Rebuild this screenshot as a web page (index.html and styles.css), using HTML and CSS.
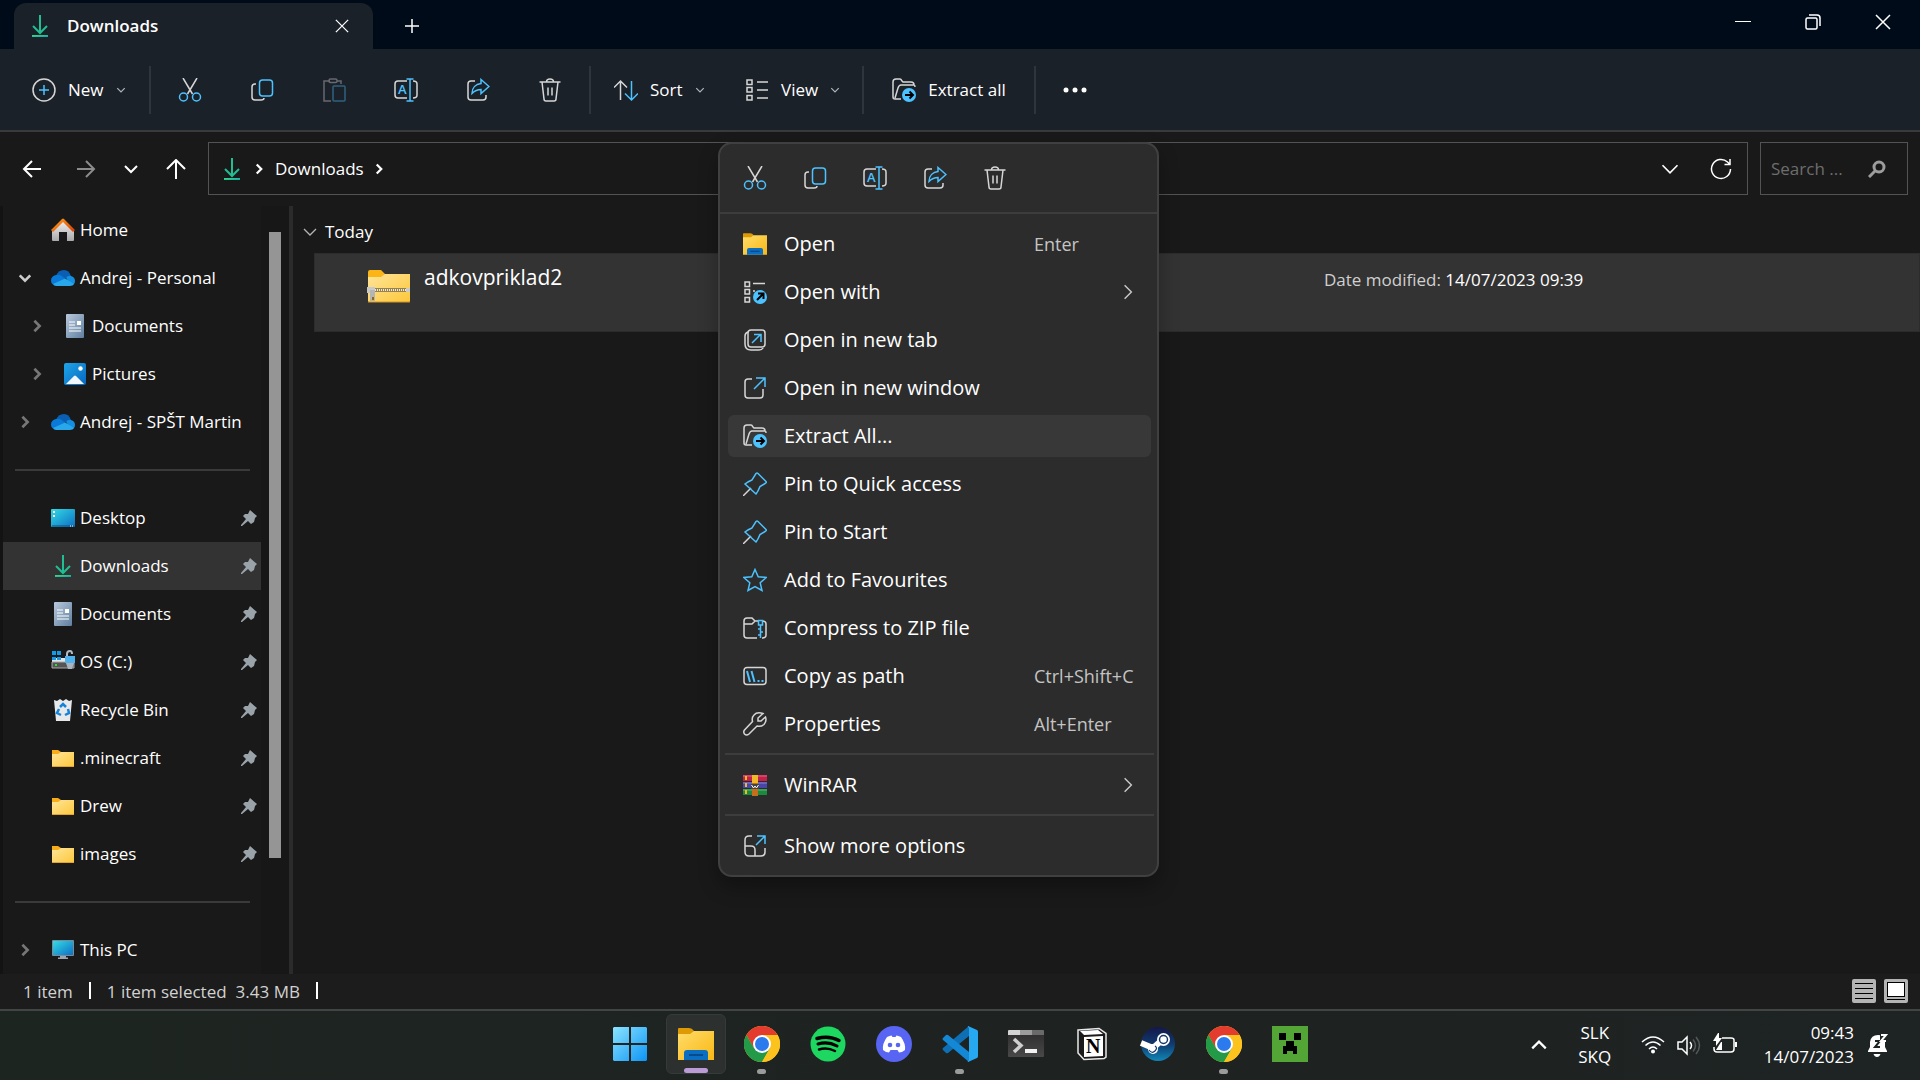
FILE: index.html
```html
<!DOCTYPE html>
<html lang="en">

<head>
  <meta charset="UTF-8">
  <meta name="viewport" content="width=device-width, initial-scale=1.0">
  <title>Downloads</title>
  <link rel="stylesheet" href="styles.css">
</head>

<body>
  <!-- shared icons -->
  <svg class="sprite" aria-hidden="true">
    <defs>
      <linearGradient id="gDown" x1="0" y1="0" x2="1" y2="1">
        <stop offset="0" stop-color="#3ddc84" />
        <stop offset="1" stop-color="#0fa3a8" />
      </linearGradient>
      <linearGradient id="gFolder" x1="0" y1="0" x2="1" y2="1">
        <stop offset="0" stop-color="#ffe59a" />
        <stop offset="1" stop-color="#fcc73a" />
      </linearGradient>
      <linearGradient id="gExplorer" x1="0" y1="0" x2="1" y2="1">
        <stop offset="0" stop-color="#ffdc6b" />
        <stop offset="1" stop-color="#f9b813" />
      </linearGradient>
      <linearGradient id="gScreen" x1="0" y1="0" x2="1" y2="1">
        <stop offset="0" stop-color="#33dbe6" />
        <stop offset="1" stop-color="#0d6fc4" />
      </linearGradient>
      <linearGradient id="gDoc" x1="0" y1="0" x2="1" y2="1">
        <stop offset="0" stop-color="#b9c9dc" />
        <stop offset="1" stop-color="#5f7f9f" />
      </linearGradient>
      <linearGradient id="gPic" x1="0" y1="0" x2="1" y2="1">
        <stop offset="0" stop-color="#1fa5e8" />
        <stop offset="1" stop-color="#0667c0" />
      </linearGradient>
      <linearGradient id="gWin" x1="0" y1="0" x2="1" y2="1">
        <stop offset="0" stop-color="#8be4ff" />
        <stop offset="1" stop-color="#0d94f5" />
      </linearGradient>
      <linearGradient id="gSteam" x1="0" y1="0" x2="0" y2="1">
        <stop offset="0" stop-color="#15174a" />
        <stop offset="0.5" stop-color="#103a6e" />
        <stop offset="1" stop-color="#1187b8" />
      </linearGradient>
      <linearGradient id="gTerm" x1="0" y1="0" x2="0" y2="1">
        <stop offset="0" stop-color="#2c2c2c" />
        <stop offset="1" stop-color="#484848" />
      </linearGradient>
      <linearGradient id="gRoof" x1="0" y1="0" x2="1" y2="1">
        <stop offset="0" stop-color="#ffa51f" />
        <stop offset="1" stop-color="#d83c04" />
      </linearGradient>
      <linearGradient id="gWall" x1="0" y1="0" x2="0" y2="1">
        <stop offset="0" stop-color="#efefef" />
        <stop offset="1" stop-color="#a9a9a9" />
      </linearGradient>
    </defs>

    <symbol id="download" viewBox="0 0 24 24">
      <path d="M12 1v17M5 12l7 7 7-7" fill="none" stroke="#21bd93" stroke-width="2" />
      <rect x="4" y="21" width="16" height="2" fill="url(#gDown)" />
    </symbol>
    <symbol id="plus" viewBox="0 0 16 16"><path class="w" d="M8 1v14M1 8h14" /></symbol>
    <symbol id="close" viewBox="0 0 16 16"><path class="w" d="M1 1l14 14M15 1L1 15" /></symbol>
    <symbol id="min" viewBox="0 0 16 16"><path d="M0 7h16v1H0z" fill="#fff" /></symbol>
    <symbol id="restore" viewBox="0 0 16 16">
      <rect class="w" x="1" y="4" width="11" height="11" rx="1.500" />
      <path class="w" d="M4 1h8q3 0 3 3v8" />
    </symbol>
    <symbol id="chev-down" viewBox="0 0 16 16"><path class="c" d="M2 5l6 6 6-6" /></symbol>
    <symbol id="chev-right" viewBox="0 0 16 16"><path class="c" d="M5 2l6 6-6 6" /></symbol>
    <symbol id="chev-up" viewBox="0 0 16 16"><path class="c" d="M2 11l6-6 6 6" /></symbol>
    <symbol id="arrow-left" viewBox="0 0 20 20"><path class="c" d="M19 10H2M10 2l-8 8 8 8" /></symbol>
    <symbol id="arrow-right" viewBox="0 0 20 20"><path class="c" d="M1 10h17M10 2l8 8-8 8" /></symbol>
    <symbol id="arrow-up" viewBox="0 0 20 20"><path class="c" d="M10 20V1M1 10l9-9 9 9" /></symbol>
    <symbol id="refresh" viewBox="0 0 22 22">
      <path class="w" d="M20.500 11a9.500 9.500 0 1 1-3-7l2 2M20 1v5.500h-5.500" />
    </symbol>

    <symbol id="new" viewBox="0 0 24 24">
      <circle class="g" cx="12" cy="12" r="11" />
      <path class="b" d="M12 7v10M7 12h10" />
    </symbol>
    <symbol id="cut" viewBox="0 0 24 24">
      <path class="g" d="M5 0l9.500 16M19 0L9.500 16" />
      <circle class="b" cx="5.500" cy="19" r="4" />
      <circle class="b" cx="18.500" cy="19" r="4" />
    </symbol>
    <symbol id="copy" viewBox="0 0 24 24">
      <path class="g" d="M6 6H5q-3 0-3 3v10q0 3 3 3h6q3 0 3-2" />
      <rect class="b" x="9.500" y="2" width="13" height="16" rx="3" />
    </symbol>
    <symbol id="paste" viewBox="0 0 24 24">
      <path class="g" d="M8 3H2v20h7M15 3h4v3" />
      <rect class="g" x="7" y="1" width="8" height="3.500" rx="1.500" />
      <rect class="b" x="11" y="8" width="12" height="15" rx="1" />
    </symbol>
    <symbol id="rename" viewBox="0 0 24 24">
      <path class="g" d="M13 3H4Q1 3 1 6v11q0 3 3 3h9M19 3q4 0 4 3v11q0 3-4 3" />
      <path class="b" d="M12.500 1h7M12.500 23h7M16 1v22" />
    </symbol>
    <symbol id="share" viewBox="0 0 24 24">
      <path class="g" d="M9 3H5Q2 3 2 6v13q0 3 3 3h12q3 0 3-3v-2" />
      <path class="b" d="M15 1.500l8 7-8 7v-4c-4 0-6 1-9 4 0-6 4-9.500 9-10z" />
    </symbol>
    <symbol id="delete" viewBox="0 0 24 24">
      <path class="g" d="M1.500 4h21M4 4l2 17q0 2 2 2h8q2 0 2-2l2-17M8.500 4q0-3 3.500-3t3.500 3M10 9.500v8M14 9.500v8" />
    </symbol>
    <symbol id="sort" viewBox="0 0 24 24">
      <path class="g" d="M6.500 22V3M0 9.500L6.500 3l6.500 6.500" />
      <path class="b" d="M17.500 3v19M11 15.500l6.500 6.500 6.500-6.500" />
    </symbol>
    <symbol id="view" viewBox="0 0 24 24">
      <path class="g" d="M2 2h5v4.500H2zM2 9.500h5V14H2zM2 17.500h5V22H2zM12 4h11M12 12h11M12 20h11" />
    </symbol>
    <symbol id="extract" viewBox="0 0 24 24">
      <path class="g" d="M9 21H3q-2 0-2-2V4q0-3 3-3h4q1 0 2 2l1 1h8q3 0 3 3M3 20L6 10q1-3 3-3h13q1 0 1 2" />
      <circle cx="17" cy="17" r="7" fill="#4cc2ff" />
      <path d="M13 17h8M17.500 13.500L21 17l-3.500 3.500" fill="none" stroke="#000" stroke-width="2" />
    </symbol>
    <symbol id="dots" viewBox="0 0 26 6">
      <circle cx="4" cy="3" r="2.500" fill="#fff" />
      <circle cx="13" cy="3" r="2.500" fill="#fff" />
      <circle cx="22" cy="3" r="2.500" fill="#fff" />
    </symbol>
    <symbol id="search" viewBox="0 0 18 18">
      <circle cx="11" cy="7" r="5" fill="none" stroke="#9d9d9d" stroke-width="3" />
      <path d="M7 11l-6 6" fill="none" stroke="#9d9d9d" stroke-width="3" />
    </symbol>

    <symbol id="openwith" viewBox="0 0 24 24">
      <path class="g" d="M2 2h4.500v4.500H2zM2 9.500h4.500V14H2zM2 17.500h4.500V22H2zM10 3.500h12M10 11h2" />
      <circle cx="17" cy="17" r="7" fill="#4cc2ff" />
      <path d="M14 20l6-6M15 13.500h5.500V19" fill="none" stroke="#000" stroke-width="2" />
    </symbol>
    <symbol id="newtab" viewBox="0 0 24 24">
      <rect class="g" x="5" y="2" width="17" height="17" rx="3" />
      <path class="g" d="M5 4Q2 5 2 8v8q0 6 6 6h8q3 0 4-2" />
      <path class="b" d="M9 15l8-8M11 6.500h7V14" />
    </symbol>
    <symbol id="newwindow" viewBox="0 0 24 24">
      <path class="g" d="M9 3H5Q2 3 2 6v13q0 3 3 3h12q3 0 3-3v-6" />
      <path class="b" d="M11 13L22 2M13 2h9v9" />
    </symbol>
    <symbol id="pin" viewBox="0 0 24 24">
      <path class="g" d="M0 24l8-8" />
      <path class="b" d="M13 1.500q1-1 2 0l8 8q1 1-1 2l-5 3q-2 5-4 7.500L2 12q2-2 7-4z" />
    </symbol>
    <symbol id="star" viewBox="0 0 24 24">
      <path class="b" d="M12 1.500l3.200 7.200 8 .8-6 5.300 1.800 7.700-7-4-7 4 1.800-7.700-6-5.300 8-.8z" />
    </symbol>
    <symbol id="zip" viewBox="0 0 24 24">
      <path class="g" d="M14 22H4q-3 0-3-3V5q0-3 3-3h5l3 3h3M1 8h8l3-3M19 5q4 0 4 3v11q0 3-4 3" />
      <path class="b" d="M15.500 4.500h4V9h-4zM17.500 9v13M15 13h2M18 16h2M15 19h2" />
    </symbol>
    <symbol id="path" viewBox="0 0 24 24">
      <rect class="g" x="1" y="3.500" width="22" height="17" rx="3" />
      <path class="b thick" d="M4 7l3 11M8.500 7l3 11M14.500 17h2M18.500 17h2" />
    </symbol>
    <symbol id="wrench" viewBox="0 0 24 24">
      <path class="g" d="M20 1.500Q14-.5 11 3q-2.500 2.500-1.500 6.500L1.500 18q-1.500 2 0 4 2 2 4.500 0l8-8q4 1 7-1.500Q24 9 22.500 5L18 9h-3V6z" />
    </symbol>
    <symbol id="moreopts" viewBox="0 0 24 24">
      <path class="g" d="M9 2H6Q2 2 2 6v12q0 4 4 4h12q4 0 4-4v-4M2 12h6q4 0 4 4v6" />
      <path class="b" d="M13 11l9-9M14 2h8v8" />
    </symbol>

    <symbol id="explorer" viewBox="0 0 36 36">
      <path d="M0 3q0-1 1-1h10q3 0 5 3v4H0z" fill="#dd9a05" />
      <path d="M0 8h12l4-3h20v29H0z" fill="url(#gExplorer)" />
      <path d="M6 34V27q0-3 3-3h18q3 0 3 3v7z" fill="#0a6fc2" />
      <path d="M11 29h14" stroke="#0a4a8a" stroke-width="2" />
    </symbol>
    <symbol id="folder" viewBox="0 0 24 24">
      <path d="M1 4h6l3 2v3H1z" fill="#f6ad18" />
      <path d="M1 8h6l3-2h13v15H1z" fill="url(#gFolder)" />
      <path d="M1 20.500h22" stroke="#e2a42c" />
    </symbol>
    <symbol id="zipfolder" viewBox="0 0 44 34">
      <path d="M1 3q0-2 2-2h11l4 4v5H1z" fill="#fbb517" />
      <path d="M1 8h13l4-3h25v27q0 1-1 1H2q-1 0-1-1z" fill="url(#gFolder)" />
      <path d="M1 33h42" stroke="#d9951c" />
      <path d="M2 21h41" stroke="#9a8348" stroke-width="4" />
      <path d="M8 21h31" stroke="#e8e8e8" stroke-width="2" stroke-dasharray="1 1" />
      <path d="M0 18h8v6H0zM39 19h4v4h-4z" fill="#c9c9c9" />
      <path d="M3 21h5v11H3z" fill="#b5b5b5" />
      <path d="M5 28h2v3H5z" fill="#8a6a1c" />
    </symbol>
    <symbol id="home" viewBox="0 0 24 24">
      <path d="M1 12L12 3l11 9v10q0 1-1 1h-6v-9H8v9H2q-1 0-1-1z" fill="url(#gWall)" />
      <path d="M0 12L11 1q1-1 2 0l11 11-2 2L12 4 2 14z" fill="url(#gRoof)" />
    </symbol>
    <symbol id="cloud" viewBox="0 0 24 24">
      <path d="M5 10q2-6 8-6 5 0 7 6l-9 4z" fill="#0a5fb5" />
      <path d="M5 19q-5 0-5-4.500T5 9q4-1 7 2l6 5-14 3z" fill="#0a7ad8" />
      <path d="M15 12q2-3 5-2 4 1 4 5t-4 4z" fill="#148ee0" />
      <path d="M2 18l11-5q1-1 2 0l8 5q-1 2-4 2H5q-2 0-3-2z" fill="#28a8ea" />
    </symbol>
    <symbol id="doc" viewBox="0 0 24 24">
      <rect x="3" y="0" width="18" height="24" rx="1" fill="url(#gDoc)" />
      <path d="M6 8h6M6 11h6M6 14h12M6 17h12" stroke="#fff" />
      <path d="M14 7h4v4h-4z" fill="#fff" />
    </symbol>
    <symbol id="pictures" viewBox="0 0 24 24">
      <rect x="1" y="1" width="22" height="22" rx="2" fill="url(#gPic)" />
      <path d="M3 22l8-8q1-1 2 0l8 8z" fill="#f0f6ff" />
      <circle cx="17.500" cy="6.500" r="2.200" fill="#fff" />
    </symbol>
    <symbol id="desktop" viewBox="0 0 24 24">
      <rect x="0" y="3" width="24" height="18" rx="1" fill="url(#gScreen)" />
      <path d="M2 5h2v2H2zM2 9h2v2H2z" fill="#fff" />
      <path d="M1 20h22" stroke="#0a4a7a" />
      <path d="M19 20h3" stroke="#fff" stroke-dasharray="1 1" />
    </symbol>
    <symbol id="drive" viewBox="0 0 24 24">
      <path d="M1 8h22v4H1z" fill="#e4e4e4" />
      <path d="M1 12h22v6H1z" fill="#555" stroke="#aaa" />
      <path d="M4 14h2v2H4z" fill="#2fe02f" />
      <path d="M1 1h4v4H1zM6 1h4v4H6zM1 7h4v3H1zM6 7h4v3H6z" fill="#129be8" />
      <path d="M16 7V4q0-3 3-3 2 0 2 3" fill="none" stroke="#aebcca" stroke-width="2" />
      <path d="M14 6h10v7H14z" fill="#4fb2ec" />
      <path d="M15 13h8l-2 6h-4z" fill="#a8b4c0" />
    </symbol>
    <symbol id="bin" viewBox="0 0 24 24">
      <path d="M3 2l3 1 3-2 3 2 3-2 3 2 3-1-2 21H5z" fill="#e6e8ea" />
      <path d="M9 9l3-3 3 3M17 11l1 4-4 2M10 17l-4-2 2-4" fill="none" stroke="#1683d8" stroke-width="2.500" />
    </symbol>
    <symbol id="pc" viewBox="0 0 24 24">
      <rect x="1" y="2" width="22" height="16" rx="1" fill="#7d8a96" />
      <path d="M2 3h20v14H2z" fill="url(#gScreen)" />
      <path d="M9 18h6v1.500H9zM7 19.500h10V21H7z" fill="#9aa5af" />
    </symbol>
    <symbol id="pinned" viewBox="0 0 16 16">
      <path d="M9 0l7 6-2 2-1 4-3 2-3-3-6 5H0v-1l5-6-3-3 2-2h3z" fill="#9aa3aa" />
    </symbol>
    <symbol id="winrar" viewBox="0 0 24 24">
      <path d="M0 2h24v6H0z" fill="#c81f4a" />
      <path d="M0 9h24v6H0z" fill="#4a45a8" />
      <path d="M0 16h24v6H0z" fill="#1a8a3c" />
      <path d="M0 3h24M0 10h24M0 17h24" stroke="#fff" stroke-opacity="0.350" />
      <path d="M3 3v19" stroke="#f4b820" stroke-width="2" stroke-dasharray="4 3" />
      <path d="M9 2h6v21H9z" fill="#c4701a" />
      <path d="M9 2h6v8H9z" fill="#f0b92a" />
      <path d="M8 11h8v5H8z" fill="#444" />
      <path d="M8.500 12l2 3 1.500-2 1.500 2 2-3" fill="none" stroke="#fff" />
    </symbol>

    <symbol id="windows" viewBox="0 0 36 36">
      <path d="M2 1h15v16H1V2zM19 1h15l1 1v15H19zM1 19h16v16H2l-1-1zM19 19h16v15l-1 1H19z" fill="url(#gWin)" />
    </symbol>
    <symbol id="chrome" viewBox="0 0 36 36">
      <circle cx="18" cy="18" r="18" fill="#fcc31e" />
      <path d="M18 18L10 22.500 2.400 9A18 18 0 0 1 33.600 9H18z" fill="#e33b2e" />
      <path d="M2.400 9A18 18 0 0 0 18 36l7.800-13.500L18 18l-7.800 4.500z" fill="#229a48" />
      <path d="M18 9h15.600A18 18 0 0 1 18 36l7.800-13.500z" fill="#fcc31e" />
      <circle cx="18" cy="18" r="9" fill="#fff" />
      <circle cx="18" cy="18" r="7" fill="#2b7bef" />
    </symbol>
    <symbol id="spotify" viewBox="0 0 36 36">
      <circle cx="18" cy="18" r="17.500" fill="#1ed760" />
      <path d="M7 12.500q12-3.500 22 2" fill="none" stroke="#000" stroke-width="3.500" stroke-linecap="round" />
      <path d="M8 18q10-3 19 2" fill="none" stroke="#000" stroke-width="3" stroke-linecap="round" />
      <path d="M9 23.500q8-2.500 16 1.500" fill="none" stroke="#000" stroke-width="2.500" stroke-linecap="round" />
    </symbol>
    <symbol id="discord" viewBox="0 0 36 36">
      <circle cx="18" cy="18" r="18" fill="#5865f2" />
      <path d="M11 11q3-1.500 4.500-1.500l1 1.500h3l1-1.500Q22 9.500 25 11q5 7 4 13-3 2.500-6 2.500L21.500 24h-7L13 26.500q-3 0-6-2.500-1-6 4-13z" fill="#fff" />
      <circle cx="14" cy="19" r="2.300" fill="#5865f2" />
      <circle cx="22" cy="19" r="2.300" fill="#5865f2" />
    </symbol>
    <symbol id="vscode" viewBox="0 0 36 36">
      <path d="M1 24l3 3q1 .5 2 0L27 10V0L1 22q-1 1 0 2z" fill="#0e6fb5" />
      <path d="M1 12l3-3q1-.5 2 0l21 17v10L1 14q-1-1 0-2z" fill="#1488d4" />
      <path d="M26 0l9 4q1 .5 1 2v24q0 1.500-1 2l-9 4q-1 0 1-2V2q-2-2-1-2z" fill="#27a9f2" />
    </symbol>
    <symbol id="terminal" viewBox="0 0 36 36">
      <rect x="0" y="4" width="36" height="27" rx="1" fill="url(#gTerm)" />
      <path d="M0 9V5q0-1 1-1h11v5z" fill="#d4d4d4" />
      <path d="M12 4h12v5H12z" fill="#9c9c9c" />
      <path d="M24 4h11q1 0 1 1v4H24z" fill="#6a6a6a" />
      <path d="M6 13l7 6.500L6 26" fill="none" stroke="#cfcfcf" stroke-width="3.500" />
      <path d="M17 23h12v4H17z" fill="#f2f2f2" />
    </symbol>
    <symbol id="steam" viewBox="0 0 36 36">
      <circle cx="18" cy="18" r="17" fill="url(#gSteam)" />
      <path d="M1 17l12 5 8-7" fill="none" stroke="#fff" stroke-width="6" />
      <circle cx="23.500" cy="13.500" r="6.500" fill="#fff" />
      <circle cx="23.500" cy="13.500" r="4" fill="none" stroke="#17386a" stroke-width="1.500" />
      <circle cx="13" cy="23" r="5" fill="#fff" />
      <path d="M9 24q3 4 6 1t0-5" fill="none" stroke="#17386a" stroke-width="1.200" />
    </symbol>
    <symbol id="creeper" viewBox="0 0 36 36">
      <path d="M0 0h36v36H0z" fill="#53a535" />
      <path d="M7 7h7v7H7zM22 7h7v7h-7zM14 15h8v5h3v8h-4v-3h-6v3h-4v-8h3z" fill="#000" />
    </symbol>

    <symbol id="wifi" viewBox="0 0 24 24">
      <path class="w" d="M1 9Q12-1 23 9M4.500 12.500q7.500-7 15 0M8 16q4-4 8 0" />
      <circle cx="12" cy="18.500" r="2" fill="#fff" />
    </symbol>
    <symbol id="volume" viewBox="0 0 24 24">
      <path class="w" d="M1 9h4l5-5v17l-5-5H1zM13 9q3 3.500 0 7" />
      <path d="M16 6.500q5 6 0 12M19 4q7 8.500 0 17" fill="none" stroke="#56595a" stroke-width="1.500" />
    </symbol>
    <symbol id="battery" viewBox="0 0 24 24">
      <path class="w" d="M9 5h9q3 0 3 2v9q0 3-3 3H4q-3 0-3-3v-2" />
      <path d="M22 9h2v5h-2zM5 0L0 8h3v5l6-8H6V0z" fill="#fff" />
      <path d="M3 17l5-8h1v8z" fill="#fff" />
    </symbol>
    <symbol id="list" viewBox="0 0 24 24">
      <rect width="24" height="24" rx="2" fill="#b4b4b4" />
      <path d="M3 4.500h18M3 9.500h18M3 14.500h18M3 19.500h18" stroke="#000" />
    </symbol>
    <symbol id="tiles" viewBox="0 0 24 24">
      <rect width="24" height="24" rx="2" fill="#b4b4b4" />
      <rect x="3.500" y="3.500" width="17" height="14" fill="#fff" stroke="#000" />
      <path d="M3 20.500h18" stroke="#000" />
    </symbol>
  </svg>

  <div class="desktop">
    <header class="titlebar">
      <div class="tab">
        <svg class="i24"><use href="#download" /></svg>
        <span class="tab-name">Downloads</span>
        <button class="tab-close" aria-label="Close tab"><svg class="i14"><use href="#close" /></svg></button>
      </div>
      <button class="tab-add" aria-label="New tab"><svg class="i16"><use href="#plus" /></svg></button>
      <div class="win-buttons">
        <button aria-label="Minimize"><svg class="i16"><use href="#min" /></svg></button>
        <button aria-label="Restore"><svg class="i16"><use href="#restore" /></svg></button>
        <button aria-label="Close"><svg class="i16"><use href="#close" /></svg></button>
      </div>
    </header>

    <div class="toolbar">
      <button class="tool tool-text"><svg class="i24"><use href="#new" /></svg>New<svg class="i10"><use href="#chev-down" /></svg></button>
      <span class="sep"></span>
      <div class="tool-group">
        <button class="tool" aria-label="Cut"><svg class="i24"><use href="#cut" /></svg></button>
        <button class="tool" aria-label="Copy"><svg class="i24"><use href="#copy" /></svg></button>
        <button class="tool faded" aria-label="Paste"><svg class="i24"><use href="#paste" /></svg></button>
        <button class="tool" aria-label="Rename">
          <svg class="i24"><use href="#rename" /><text class="letter" x="4" y="16">A</text></svg>
        </button>
        <button class="tool" aria-label="Share"><svg class="i24"><use href="#share" /></svg></button>
        <button class="tool" aria-label="Delete"><svg class="i24"><use href="#delete" /></svg></button>
      </div>
      <span class="sep"></span>
      <button class="tool tool-text"><svg class="i24"><use href="#sort" /></svg>Sort<svg class="i10"><use href="#chev-down" /></svg></button>
      <button class="tool tool-text"><svg class="i24"><use href="#view" /></svg>View<svg class="i10"><use href="#chev-down" /></svg></button>
      <span class="sep"></span>
      <button class="tool tool-extract"><svg class="i24"><use href="#extract" /></svg>Extract all</button>
      <span class="sep"></span>
      <button class="tool" aria-label="See more"><svg class="dots"><use href="#dots" /></svg></button>
    </div>

    <div class="navrow">
      <div class="nav-buttons">
        <button class="nav-wide" aria-label="Back"><svg class="i20"><use href="#arrow-left" /></svg></button>
        <button class="nav-wide dim" aria-label="Forward"><svg class="i20"><use href="#arrow-right" /></svg></button>
        <button class="nav-slim" aria-label="Recent locations"><svg class="i16"><use href="#chev-down" /></svg></button>
        <button class="nav-wide" aria-label="Up"><svg class="i20"><use href="#arrow-up" /></svg></button>
      </div>
      <div class="address">
        <svg class="i24"><use href="#download" /></svg>
        <svg class="i12 bold"><use href="#chev-right" /></svg>
        <a href="#" class="crumb">Downloads</a>
        <svg class="i12 bold"><use href="#chev-right" /></svg>
        <button class="address-drop" aria-label="Previous locations"><svg class="i20 thin"><use href="#chev-down" /></svg></button>
        <button aria-label="Refresh"><svg class="i22"><use href="#refresh" /></svg></button>
      </div>
      <div class="searchbox">
        <input type="text" placeholder="Search ..." aria-label="Search Downloads">
        <svg class="i18"><use href="#search" /></svg>
      </div>
    </div>

    <div class="content">
      <nav class="sidebar">
        <div class="side-list">
          <a href="#" class="side-item"><span class="arrow"></span><svg class="i24"><use href="#home" /></svg>Home</a>
          <a href="#" class="side-item"><span class="arrow open"><svg class="i14 bold"><use href="#chev-down" /></svg></span><svg class="i24"><use href="#cloud" /></svg>Andrej - Personal</a>
          <a href="#" class="side-item nested"><span class="arrow"><svg class="i14 bold"><use href="#chev-right" /></svg></span><svg class="i24"><use href="#doc" /></svg>Documents</a>
          <a href="#" class="side-item nested"><span class="arrow"><svg class="i14 bold"><use href="#chev-right" /></svg></span><svg class="i24"><use href="#pictures" /></svg>Pictures</a>
          <a href="#" class="side-item"><span class="arrow"><svg class="i14 bold"><use href="#chev-right" /></svg></span><svg class="i24"><use href="#cloud" /></svg>Andrej - SPŠT Martin</a>
          <div class="side-line"></div>
          <a href="#" class="side-item"><span class="arrow"></span><svg class="i24"><use href="#desktop" /></svg>Desktop<svg class="i16 pinned"><use href="#pinned" /></svg></a>
          <a href="#" class="side-item active"><span class="arrow"></span><svg class="i24"><use href="#download" /></svg>Downloads<svg class="i16 pinned"><use href="#pinned" /></svg></a>
          <a href="#" class="side-item"><span class="arrow"></span><svg class="i24"><use href="#doc" /></svg>Documents<svg class="i16 pinned"><use href="#pinned" /></svg></a>
          <a href="#" class="side-item"><span class="arrow"></span><svg class="i24"><use href="#drive" /></svg>OS (C:)<svg class="i16 pinned"><use href="#pinned" /></svg></a>
          <a href="#" class="side-item"><span class="arrow"></span><svg class="i24"><use href="#bin" /></svg>Recycle Bin<svg class="i16 pinned"><use href="#pinned" /></svg></a>
          <a href="#" class="side-item"><span class="arrow"></span><svg class="i24"><use href="#folder" /></svg>.minecraft<svg class="i16 pinned"><use href="#pinned" /></svg></a>
          <a href="#" class="side-item"><span class="arrow"></span><svg class="i24"><use href="#folder" /></svg>Drew<svg class="i16 pinned"><use href="#pinned" /></svg></a>
          <a href="#" class="side-item"><span class="arrow"></span><svg class="i24"><use href="#folder" /></svg>images<svg class="i16 pinned"><use href="#pinned" /></svg></a>
          <div class="side-line"></div>
          <a href="#" class="side-item"><span class="arrow"><svg class="i14 bold"><use href="#chev-right" /></svg></span><svg class="i24"><use href="#pc" /></svg>This PC</a>
        </div>
        <div class="scroll"><div class="thumb"></div></div>
      </nav>

      <main class="files">
        <button class="group"><svg class="i16 thin"><use href="#chev-down" /></svg>Today</button>
        <div class="file">
          <svg class="file-icon"><use href="#zipfolder" /></svg>
          <span class="file-name">adkovpriklad2</span>
          <span class="file-date"><span class="label">Date modified:</span> 14/07/2023 09:39</span>
        </div>
      </main>
    </div>

    <footer class="status">
      <span class="status-cell">1 item</span>
      <span class="status-cell"><span>1 item selected</span><span>3.43 MB</span></span>
      <div class="view-buttons">
        <button aria-label="Details view"><svg class="i24"><use href="#list" /></svg></button>
        <button aria-label="Large icons view"><svg class="i24"><use href="#tiles" /></svg></button>
      </div>
    </footer>

    <div class="taskbar">
      <div class="apps">
        <button class="app" aria-label="Start"><svg class="i36"><use href="#windows" /></svg></button>
        <button class="app current" aria-label="File Explorer"><svg class="i36"><use href="#explorer" /></svg></button>
        <button class="app running" aria-label="Chrome"><svg class="i36"><use href="#chrome" /></svg></button>
        <button class="app" aria-label="Spotify"><svg class="i36"><use href="#spotify" /></svg></button>
        <button class="app" aria-label="Discord"><svg class="i36"><use href="#discord" /></svg></button>
        <button class="app running" aria-label="Visual Studio Code"><svg class="i36"><use href="#vscode" /></svg></button>
        <button class="app" aria-label="Terminal"><svg class="i36"><use href="#terminal" /></svg></button>
        <button class="app" aria-label="Notion">
          <svg class="i36">
            <path d="M4 4l21-1.500 7 5V31l-2 1.500-20 1L4 27z" fill="#1a1a1a" stroke="#e8e8e8" stroke-width="1.500" />
            <path d="M6 5l18-1 5 4-19 1z" fill="#fff" />
            <path d="M10 11l19-1v20l-19 1z" fill="#fff" />
            <text class="notion-letter" x="12" y="27">N</text>
          </svg>
        </button>
        <button class="app" aria-label="Steam"><svg class="i36"><use href="#steam" /></svg></button>
        <button class="app running" aria-label="Chrome"><svg class="i36"><use href="#chrome" /></svg></button>
        <button class="app" aria-label="Minecraft"><svg class="i36"><use href="#creeper" /></svg></button>
      </div>
      <div class="tray">
        <button aria-label="Hidden icons"><svg class="i18"><use href="#chev-up" /></svg></button>
        <button class="lang">SLK<br>SKQ</button>
        <button class="quick" aria-label="Quick settings">
          <svg class="i24"><use href="#wifi" /></svg>
          <svg class="i24"><use href="#volume" /></svg>
          <svg class="i24"><use href="#battery" /></svg>
        </button>
        <button class="clock">
          <span>09:43<br>14/07/2023</span>
          <svg class="i24">
            <path d="M2 18l2-4V9q1-7 8-7 6 0 7 5v7l2 4v1H2z" fill="#fff" />
            <path d="M7.500 21h7q-1 3-3.500 3t-3.500-3z" fill="#fff" />
            <path d="M9 8h5l-5 6h5" fill="none" stroke="#1d2422" stroke-width="2" />
            <path d="M14 0h8v9h-8z" fill="#1e2323" />
            <path d="M15 2h5l-5 6h5" fill="none" stroke="#fff" stroke-width="2" />
          </svg>
        </button>
      </div>
    </div>

    <div class="menu">
      <div class="menu-icons">
        <button aria-label="Cut"><svg class="i24"><use href="#cut" /></svg></button>
        <button aria-label="Copy"><svg class="i24"><use href="#copy" /></svg></button>
        <button aria-label="Rename">
          <svg class="i24"><use href="#rename" /><text class="letter" x="4" y="16">A</text></svg>
        </button>
        <button aria-label="Share"><svg class="i24"><use href="#share" /></svg></button>
        <button aria-label="Delete"><svg class="i24"><use href="#delete" /></svg></button>
      </div>
      <div class="menu-list">
        <button class="menu-item"><svg class="i24"><use href="#explorer" /></svg>Open<span class="key">Enter</span></button>
        <button class="menu-item"><svg class="i24"><use href="#openwith" /></svg>Open with<svg class="i18 more thin"><use href="#chev-right" /></svg></button>
        <button class="menu-item"><svg class="i24"><use href="#newtab" /></svg>Open in new tab</button>
        <button class="menu-item"><svg class="i24"><use href="#newwindow" /></svg>Open in new window</button>
        <button class="menu-item hover"><svg class="i24"><use href="#extract" /></svg>Extract All...</button>
        <button class="menu-item"><svg class="i24"><use href="#pin" /></svg>Pin to Quick access</button>
        <button class="menu-item"><svg class="i24"><use href="#pin" /></svg>Pin to Start</button>
        <button class="menu-item"><svg class="i24"><use href="#star" /></svg>Add to Favourites</button>
        <button class="menu-item"><svg class="i24"><use href="#zip" /></svg>Compress to ZIP file</button>
        <button class="menu-item"><svg class="i24"><use href="#path" /></svg>Copy as path<span class="key">Ctrl+Shift+C</span></button>
        <button class="menu-item"><svg class="i24"><use href="#wrench" /></svg>Properties<span class="key">Alt+Enter</span></button>
      </div>
      <div class="menu-list">
        <button class="menu-item"><svg class="i24"><use href="#winrar" /></svg>WinRAR<svg class="i18 more thin"><use href="#chev-right" /></svg></button>
      </div>
      <div class="menu-list">
        <button class="menu-item"><svg class="i24"><use href="#moreopts" /></svg>Show more options</button>
      </div>
    </div>
  </div>
</body>

</html>
```

FILE: styles.css
```css
* {
  box-sizing: border-box;
}

body {
  margin: 0;
  background: #191919;
  color: #fff;
  font-family: "Open Sans", "Noto Sans", sans-serif;
  font-size: 17px;
  line-height: 24px;
}

button {
  display: flex;
  align-items: center;
  justify-content: center;
  padding: 0;
  border: 0;
  background: none;
  color: inherit;
  font: inherit;
  white-space: nowrap;
}

a {
  color: inherit;
  text-decoration: none;
}

svg {
  flex: none;
  display: block;
}

/* icons */
.sprite {
  position: absolute;
  width: 0;
  height: 0;
}

.i10 { width: 10px; height: 10px; }
.i12 { width: 12px; height: 12px; }
.i14 { width: 14px; height: 14px; }
.i16 { width: 16px; height: 16px; }
.i18 { width: 18px; height: 18px; }
.i20 { width: 20px; height: 20px; }
.i22 { width: 22px; height: 22px; }
.i24 { width: 24px; height: 24px; }
.i36 { width: 36px; height: 36px; }

.dots {
  width: 26px;
  height: 6px;
}

.w,
.g,
.b,
.c {
  fill: none;
  stroke: #fff;
  stroke-width: 1.5;
}

.g {
  stroke: #d6d6d6;
}

.b {
  stroke: #4cc2ff;
}

.b.thick {
  stroke-width: 2;
}

.c {
  stroke: currentColor;
  stroke-width: var(--line, 2);
}

.bold {
  --line: 3;
}

.thin {
  --line: 1.3;
}

.letter {
  fill: #4cc2ff;
  font-family: "Open Sans", sans-serif;
  font-size: 13px;
  font-weight: 600;
}

.notion-letter {
  fill: #000;
  font-family: "Liberation Serif", serif;
  font-size: 20px;
  font-weight: bold;
}

/* window */
.desktop {
  position: relative;
  display: flex;
  flex-direction: column;
  min-height: 100vh;
}

.titlebar {
  display: flex;
  align-items: flex-end;
  height: 49px;
  padding-left: 14px;
  background: #000b1a;
}

.tab {
  display: flex;
  align-items: center;
  width: 359px;
  height: 46px;
  padding: 0 24px 0 14px;
  border-radius: 12px 12px 0 0;
  background: #1b2129;
}

.tab-name {
  margin-left: 15px;
  font-weight: 600;
}

.tab-close {
  margin-left: auto;
}

.tab-add {
  width: 78px;
  height: 46px;
}

.win-buttons {
  display: flex;
  height: 49px;
  margin-left: auto;
  padding-right: 2px;
}

.win-buttons button {
  width: 70px;
  padding-bottom: 6px;
}

.toolbar {
  display: flex;
  align-items: center;
  gap: 9px;
  height: 83px;
  padding-left: 18px;
  border-bottom: 2px solid #3a3a3a;
  background: #1b2129;
}

.tool {
  width: 60px;
  height: 48px;
}

.tool-group {
  display: flex;
  gap: 12px;
}

.tool-text {
  width: 122px;
  padding: 0 14px;
  gap: 12px;
  justify-content: flex-start;
}

.tool-extract {
  width: 152px;
  gap: 12px;
}

.tool .i10 {
  color: #b0b3b8;
}

.faded {
  opacity: 0.4;
}

.sep {
  width: 2px;
  height: 48px;
  background: #2f353c;
}

.navrow {
  display: flex;
  align-items: flex-start;
  height: 74px;
  padding: 10px 12px 0 5px;
}

.nav-buttons {
  display: flex;
  width: 203px;
  height: 53px;
}

.nav-wide {
  width: 54px;
}

.nav-slim {
  width: 36px;
}

.dim {
  color: #8c8c8c;
}

.address {
  flex: 1;
  display: flex;
  align-items: center;
  height: 53px;
  padding: 0 15px 0 11px;
  border: 1px solid #535353;
}

.address .i12 {
  margin: 0 10px 0 9px;
}

.address-drop {
  margin-left: auto;
  margin-right: 30px;
}

.searchbox {
  display: flex;
  align-items: center;
  width: 148px;
  height: 53px;
  margin-left: 12px;
  padding: 0 21px 0 10px;
  border: 1px solid #535353;
}

.searchbox input {
  flex: 1;
  min-width: 0;
  padding: 0;
  border: 0;
  outline: 0;
  background: none;
  color: #fff;
  font: inherit;
}

.searchbox input::placeholder {
  color: #6d6d6d;
}

/* sidebar */
.content {
  flex: 1;
  display: flex;
}

.sidebar {
  display: flex;
  width: 293px;
  border-left: 3px solid #131313;
  border-right: 4px solid #2b2b2b;
}

.side-list {
  width: 258px;
}

.side-item {
  display: flex;
  align-items: center;
  height: 48px;
  padding: 0 4px 0 9px;
  white-space: nowrap;
}

.side-item .i24 {
  margin: 0 5px 0 13px;
}

.nested {
  padding-left: 21px;
}

.active {
  background: #333;
}

.arrow {
  width: 26px;
  padding-left: 6px;
  color: #777;
}

.open {
  color: #ccc;
}

.side-item .pinned {
  margin-left: auto;
}

.side-line {
  height: 48px;
  padding: 23px 11px 0 12px;
}

.side-line::before {
  content: "";
  display: block;
  height: 2px;
  background: #3a3a3a;
}

.scroll {
  flex: 1;
  padding: 26px 8px 116px;
  background: #171717;
}

.thumb {
  height: 100%;
  background: #959595;
}

/* files */
.files {
  flex: 1;
  padding: 8px 0 0 21px;
}

.group {
  height: 39px;
  padding-bottom: 3px;
  margin-left: -12px;
  gap: 7px;
}

.group svg {
  color: #b5b5b5;
}

.file {
  display: flex;
  align-items: flex-start;
  height: 79px;
  padding: 14px 0 0 52px;
  border: 1px solid #2c2c2c;
  background: #333;
}

.file-icon {
  width: 44px;
  height: 34px;
  margin-top: 1px;
}

.file-name {
  flex: 1;
  margin-left: 13px;
  margin-top: -3px;
  font-size: 21px;
}

.file-date {
  flex: none;
  width: 595px;
}

.file-date .label {
  color: #d0d0d0;
}

/* status bar */
.status {
  display: flex;
  align-items: center;
  height: 35px;
  padding: 0 12px 2px 7px;
  background: #1c1c1c;
  color: #d2d2d2;
}

.status-cell {
  display: flex;
  gap: 9px;
  height: 17px;
  line-height: 19px;
  padding: 0 16px;
  border-right: 2px solid #fff;
}

.view-buttons {
  display: flex;
  gap: 8px;
  margin-left: auto;
}

/* taskbar */
.taskbar {
  display: grid;
  grid-template-columns: 1fr auto 1fr;
  height: 72px;
  border-top: 2px solid #414544;
  background: linear-gradient(90deg, #1d2521, #1e2321 50%, #1e2323);
}

.apps {
  grid-column: 2;
  display: flex;
  gap: 6px;
  padding-top: 3px;
}

.app {
  position: relative;
  width: 60px;
  height: 60px;
  border-radius: 6px;
}

.current {
  border: 1px solid #363b3a;
  background: #2c3130;
}

.running::after,
.current::after {
  content: "";
  position: absolute;
  left: 50%;
  bottom: 0;
  width: 9px;
  height: 5px;
  margin-left: -5px;
  border-radius: 3px;
  background: #9a9c9b;
}

.current::after {
  width: 24px;
  margin-left: -12px;
  background: #ba9bd6;
}

.tray {
  display: flex;
  align-items: center;
  justify-content: flex-end;
  padding: 0 30px 3px 0;
}

.lang {
  width: 72px;
  margin-left: 11px;
}

.quick {
  gap: 12px;
  margin-left: 10px;
}

.clock {
  gap: 12px;
  margin-left: 27px;
  text-align: right;
}

/* context menu */
.menu {
  position: absolute;
  left: 718px;
  top: 142px;
  width: 441px;
  border: 2px solid #404040;
  border-radius: 14px;
  background: #2c2c2c;
  box-shadow: 0 10px 20px rgba(0, 0, 0, 0.3);
}

.menu-icons {
  display: flex;
  height: 68px;
  padding-left: 5px;
}

.menu-icons button {
  width: 60px;
}

.menu-list {
  padding: 9px 6px 8px 8px;
  border-top: 2px solid #3d3d3d;
}

.menu-list + .menu-list {
  margin: 0 3px 0 5px;
  padding-left: 3px;
  padding-right: 3px;
}

.menu-item {
  width: 100%;
  height: 42px;
  margin-bottom: 6px;
  padding: 0 14px 0 15px;
  justify-content: flex-start;
  border-radius: 6px;
  font-size: 20px;
}

.menu-item:last-child {
  margin-bottom: 0;
}

.menu-item .i24 {
  margin-right: 17px;
}

.hover {
  background: #383838;
}

.key {
  width: 103px;
  margin-left: auto;
  color: #c4c4c4;
  font-size: 18px;
  text-align: left;
}

.more {
  margin-left: auto;
  color: #c8c8c8;
}
```
